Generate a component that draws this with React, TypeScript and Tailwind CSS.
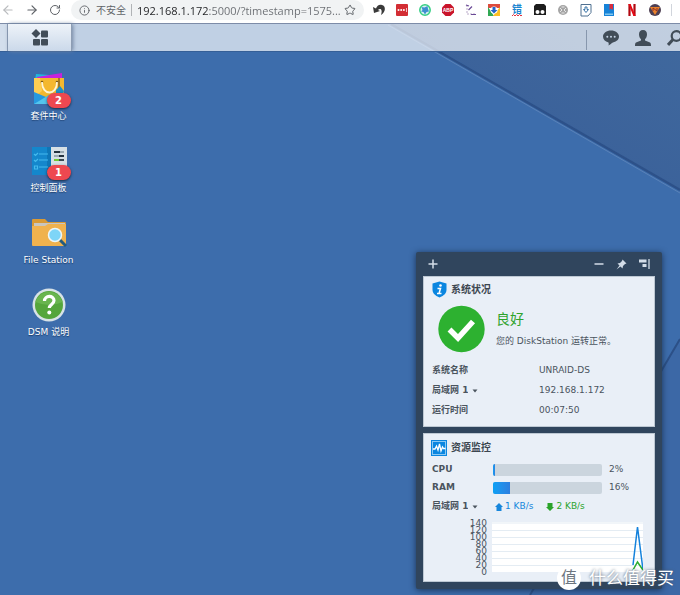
import type { ReactNode } from "react";
import { ArrowLeft, ArrowRight, Info, RotateCw, Star } from "lucide-react";

type AppProps = {
  name: string;
  badge?: number;
  children: ReactNode;
}

type MeterProps = {
  label: string;
  value: number;
}

const ticks = [140, 120, 100, 80, 60, 40, 20, 0];

function Wallpaper() {
  return (
    <svg className="absolute inset-0 h-full w-full" viewBox="0 0 680 595" preserveAspectRatio="xMaxYMin slice" aria-hidden="true">
      <defs>
        <linearGradient id="fold" x1="0" y1="1" x2="1" y2="0">
          <stop offset="0.3" stopColor="#3a6099" />
          <stop offset="1" stopColor="#40699e" />
        </linearGradient>
      </defs>
      <rect width="680" height="595" fill="#3d6dac" />
      <path d="M392 23 L680 189 V23 Z" fill="url(#fold)" />
      <path d="M391 24 L680 190" stroke="#2d5189" strokeWidth="2.500" />
      <path d="M388 25 L680 193" stroke="#5a82b8" strokeWidth="1" />
      <path d="M680 339 L530 595 H680 Z" fill="#3c68a6" />
      <path d="M680 339 L530 595" stroke="#2c5087" strokeWidth="2" />
    </svg>
  )
}

function BrowserBar() {
  return (
    <header className="relative flex h-6 items-start border-b border-[#7d8ca8] bg-white">
      <div className="flex h-5 shrink-0 items-center gap-[10px] pl-[1px] text-[#5f6368]">
        <button aria-label="Back" className="text-[#b9bbbe]"><ArrowLeft size={14} /></button>
        <button aria-label="Forward"><ArrowRight size={14} /></button>
        <button aria-label="Reload"><RotateCw size={12} /></button>
      </div>
      <div className="ml-[10px] flex h-5 min-w-0 flex-1 items-center rounded-r-full rounded-l-full bg-[#f1f3f4] pr-2 pl-2 text-[#5f6368]">
        <Info size={11} className="shrink-0" />
        <span className="ml-[6px] shrink-0 font-['Noto_Sans_CJK_SC',sans-serif] text-[10px] leading-5">不安全</span>
        <span className="mx-[5px] h-3 w-px shrink-0 bg-[#b0b3b6]" />
        <input
          aria-label="Address"
          readOnly
          value="192.168.1.172:5000/?timestamp=1575..."
          className="h-5 w-0 min-w-0 flex-1 bg-linear-to-r from-[#202124] from-[71px] to-[#6a6d72] to-[72px] bg-clip-text font-['Open_Sans',sans-serif] text-[11px] text-transparent outline-none"
        />
        <button aria-label="Bookmark" className="shrink-0"><Star size={12} /></button>
      </div>
      <div className="ml-2 flex h-5 shrink-0 items-center gap-[9px] pr-2">
        <button aria-label="Undo">
          <svg width="14" height="14" viewBox="0 0 14 14">
            <path d="M1 4 L2 10 L8 8 L6 7 C8 5 11 6 9 12 C14 9 14 3 10 2 C7 1 5 3 4 5.500 Z" fill="#3a3a3a" />
          </svg>
        </button>
        <button aria-label="Password manager">
          <svg width="14" height="14" viewBox="0 0 14 14">
            <rect x="1" y="1" width="12" height="12" rx="1" fill="#d32d34" />
            <g fill="#fff"><circle cx="3.500" cy="7" r="1" /><circle cx="6.200" cy="7" r="1" /><circle cx="8.900" cy="7" r="1" /><path d="M11 5h.7v4H11z" /></g>
          </svg>
        </button>
        <button aria-label="Sync">
          <svg width="14" height="14" viewBox="0 0 14 14">
            <circle cx="7" cy="7" r="5.200" fill="#d7f2f2" stroke="#35cf83" strokeWidth="1.500" />
            <path d="M3.500 4 L6.500 4.500 L9.500 3 L10 6 L11 8.500 L8.500 9 L7 11.500 L5.500 9 L3 8.500 L4.500 7 Z" fill="#3e8fd0" />
          </svg>
        </button>
        <button aria-label="Ad blocker">
          <svg width="14" height="14" viewBox="0 0 14 14">
            <path d="M4.500 1h5L13 4.500v5L9.500 13h-5L1 9.500v-5Z" fill="#c9142b" />
            <text x="7" y="9" textAnchor="middle" fontSize="5" fontWeight="700" fontFamily="Liberation Sans, sans-serif" fill="#fff">ABP</text>
          </svg>
        </button>
        <button aria-label="Picker">
          <svg width="14" height="14" viewBox="0 0 14 14" fill="none">
            <path d="M3 2v9h9" stroke="#b9a9c8" strokeDasharray="2 1" />
            <path d="M2 2l3 1M4.500 7l3.500-3.500M7 11.500h5" stroke="#6b4a96" strokeWidth="1.200" />
          </svg>
        </button>
        <button aria-label="Downloader">
          <svg width="14" height="14" viewBox="0 0 14 14">
            <path d="M1 1h12v4H1z" fill="#dd4b3e" /><path d="M1 4l6 9H1z" fill="#31a853" /><path d="M13 4v9H6z" fill="#fbbf24" />
            <circle cx="7" cy="7" r="3.600" fill="#fff" /><path d="M5.500 4h3v3h2L7 10.500 3.500 7h2z" fill="#2467c9" />
          </svg>
        </button>
        <button aria-label="Typo report">
          <svg width="14" height="14" viewBox="0 0 14 14">
            <text x="7" y="10" textAnchor="middle" fontSize="10" fontWeight="700" fontFamily="Noto Sans CJK SC, sans-serif" fill="#1b86d0">错</text>
            <path d="M2 13l1.500-1.500L5 13l1.500-1.500L8 13l1.500-1.500L11 13l1-1" fill="none" stroke="#e5333f" />
          </svg>
        </button>
        <button aria-label="Scripts">
          <svg width="14" height="14" viewBox="0 0 14 14">
            <path d="M3 1h8l2 2v9H1V3Z" fill="#1d1d1d" /><circle cx="4.500" cy="9" r="2" fill="#fff" /><circle cx="9.500" cy="9" r="2" fill="#fff" />
          </svg>
        </button>
        <button aria-label="Disabled extension">
          <svg width="14" height="14" viewBox="0 0 14 14">
            <circle cx="7" cy="7" r="5" fill="#a5a5a5" /><path d="M4 5l2 2-2 2M10 5L8 7l2 2M5.500 4h3M5.500 10h3" fill="none" stroke="#e8e8e8" />
          </svg>
        </button>
        <button aria-label="Save page">
          <svg width="14" height="14" viewBox="0 0 14 14" fill="none" stroke="#4f7091">
            <path d="M2 1.500h10v8L9 13H2z" /><path d="M6 4h2v2.500h1.500L7 9.500 4.500 6.500H6z" stroke="#3874a8" />
          </svg>
        </button>
        <button aria-label="Reader">
          <svg width="14" height="14" viewBox="0 0 14 14">
            <path d="M2 1h10v12H2z" fill="#1683d8" /><path d="M3 10.500h8v1.500H3z" fill="#80c6ef" /><path d="M7.500 1H11v6L9.200 5.500 7.500 7z" fill="#d92e3f" />
          </svg>
        </button>
        <button aria-label="Netflix">
          <svg width="14" height="14" viewBox="0 0 14 14">
            <path d="M4.500 1v12M9.500 1v12" stroke="#b20710" strokeWidth="2.200" /><path d="M3.400 1H5.600l5 12H8.400z" fill="#e50914" />
          </svg>
        </button>
        <button aria-label="Hero">
          <svg width="14" height="14" viewBox="0 0 14 14">
            <circle cx="7" cy="7" r="6" fill="#4d3f52" /><path d="M2 4h10l-5 8z" fill="#e9822c" /><path d="M5 8V5l4 3V5" fill="none" stroke="#8a2d29" />
          </svg>
        </button>
        <span className="h-3 w-px bg-gray-300" />
      </div>
    </header>
  )
}

function Taskbar() {
  return (
    <div className="relative flex h-7 items-stretch border-b border-[#355f97] bg-white/68 text-[#424d58]">
      <div className="w-2 border-r border-[#8d9db3] bg-white/30" />
      <button aria-label="Main menu" className="flex w-16 items-center justify-center border-r border-[#8d9db3] bg-linear-to-b from-[#eef3f9] to-[#cbd9ea] shadow-[1px_0_4px_#6f83a0]">
        <svg width="18" height="18" viewBox="0 0 18 18" fill="currentColor">
          <path d="M5 0 L9.500 4.500 L5 9 L0.500 4.500 Z" />
          <rect x="10" y="1.500" width="7" height="7" rx="1" />
          <rect x="2" y="10" width="7" height="6.500" rx="1" />
          <rect x="10" y="10" width="7" height="6.500" rx="1" />
        </svg>
      </button>
      <div className="-mr-[3px] ml-auto flex items-center gap-4">
        <span className="mt-1 h-5 w-px bg-[#8797ad]" />
        <button aria-label="Notifications">
          <svg width="16" height="16" viewBox="0 0 16 16">
            <path d="M8 .5c4.500 0 8 2.700 8 6 0 3.500-3 5-6 6-1.500.7-2.700 2-4.500 3 .4-1 .3-2 0-3C2 11.500 0 9.300 0 6.500c0-3.300 3.500-6 8-6Z" fill="currentColor" />
            <g fill="#c6d4e6"><circle cx="4.300" cy="6.700" r="1" /><circle cx="8" cy="6.700" r="1" /><circle cx="11.700" cy="6.700" r="1" /></g>
          </svg>
        </button>
        <button aria-label="Account">
          <svg width="16" height="16" viewBox="0 0 16 16" fill="currentColor">
            <path d="M8 0c2.700 0 4 1.800 4 4.300 0 2-.8 4-2 5v1.200l5 2c.8.400 1 1.500 1 3.500H0c0-2 .2-3.100 1-3.500l5-2V9.300c-1.200-1-2-3-2-5C4 1.800 5.300 0 8 0Z" />
          </svg>
        </button>
        <button aria-label="Search">
          <svg width="16" height="16" viewBox="0 0 16 16" fill="none" stroke="currentColor">
            <circle cx="9.500" cy="6" r="4.800" strokeWidth="2.200" /><path d="M6 9.500L1 15" strokeWidth="3" />
          </svg>
        </button>
      </div>
    </div>
  )
}

function DesktopApp({ name, badge, children }: AppProps) {
  return (
    <button className="flex w-[97px] flex-col items-center">
      <span className="relative flex h-[35px] w-9 items-center justify-center">
        {children}
        {badge && (
          <span className="absolute -right-1 -bottom-[2px] z-10 flex h-[15px] w-6 items-center justify-center rounded-full bg-[#ee4850] text-[10px] font-bold text-white shadow-sm shadow-black/50">
            {badge}
          </span>
        )}
      </span>
      <span className="text-[9px] leading-5 text-white [text-shadow:0_1px_1px_#1d3e6d]">{name}</span>
    </button>
  )
}

function Apps() {
  return (
    <nav className="flex flex-col gap-[17px] pt-[19px]">
      <DesktopApp name="套件中心" badge={2}>
        <svg width="34" height="34" viewBox="0 0 34 34">
          <path d="M4 2l13 1v5H3z" fill="#20b9dc" /><path d="M5 5l25-4v7H5z" fill="#c522dc" />
          <path d="M2 6h30v26H2z" fill="#f4b82f" /><path d="M2 6h6l2 13-8 6z" fill="#ffce52" />
          <path d="M2 20l12 5-5 7H2z" fill="#2699e0" /><path d="M2 32l15-9 15 9z" fill="#54c5ed" />
          <circle cx="10" cy="10" r="1.300" fill="#7d5914" /><circle cx="25" cy="10" r="1.300" fill="#7d5914" />
          <path d="M10 10c0 14 15 14 15 0" fill="none" stroke="#fff5d5" strokeWidth="1.800" />
          <path d="M27 6v10" stroke="#8d661b" strokeWidth="1.500" /><path d="M24 18l4-4 4 5-2 6-6-2z" fill="#218fc4" />
        </svg>
      </DesktopApp>
      <DesktopApp name="控制面板" badge={1}>
        <svg width="36" height="32" viewBox="0 0 36 32">
          <path d="M1 2h19v28H1z" fill="#1487cc" /><path d="M20 2h16v28H20z" fill="#d7e0e5" />
          <path d="M16 2h4v28h-4z" fill="#0e76b7" />
          <g fill="none" stroke="#44b9ed" strokeWidth="1.200"><path d="M3 9l1.500 1.500L7 8M3 15l1.500 1.500L7 14M3.500 21h3v3h-3zM8 9h9M8 15h9M8 22h9" /></g>
          <path d="M23 6h6v2h-6zM28 10h5v2h-5z" fill="#25333e" /><path d="M29 6h4v2h-4zM23 10h5v2h-5z" fill="#99a8b0" />
          <path d="M23 14h5v2h-5z" fill="#70c934" /><path d="M28 14h5v2h-5z" fill="#3a4851" />
        </svg>
      </DesktopApp>
      <DesktopApp name="File Station">
        <svg width="36" height="30" viewBox="0 0 36 30">
          <path d="M1 2q0-1 1-1h12l3 3h17q1 0 1 1v22H1z" fill="#d99a35" />
          <path d="M3 5h31v5H3z" fill="#c9c6bf" />
          <path d="M1 8h13l3-2h18v21q0 1-1 1H2q-1 0-1-1z" fill="#f0b24e" />
          <path d="M28 21l7 7" stroke="#245b7e" strokeWidth="3" />
          <circle cx="24" cy="17" r="6.500" fill="#7ed5f7" stroke="#eff6f8" strokeWidth="1.500" />
        </svg>
      </DesktopApp>
      <DesktopApp name="DSM 说明">
        <svg width="34" height="34" viewBox="0 0 34 34">
          <circle cx="17" cy="17" r="16.500" fill="#d7e2e7" /><circle cx="17" cy="17" r="14" fill="#55a63c" />
          <path d="M3.500 14a14 14 0 0 1 27 0q-13 6-27 0z" fill="#69b54f" />
          <path d="M12.500 13c0-6 9.500-6 9.500-.5 0 4-4.700 3.800-4.700 7.500" fill="none" stroke="#fff" strokeWidth="3.200" />
          <circle cx="17.300" cy="24.500" r="2" fill="#fff" />
        </svg>
      </DesktopApp>
    </nav>
  )
}

function LanSelect() {
  return (
    <span className="inline-flex items-center">
      <select aria-label="网络接口" className="field-sizing-content h-4 appearance-none font-bold">
        <option>局域网 1</option>
      </select>
      <svg className="ml-1" width="6" height="4" viewBox="0 0 6 4" aria-hidden="true"><path d="M0.500 0.500h5L3 3.500z" fill="#4a545e" /></svg>
    </span>
  )
}

function SystemHealth() {
  return (
    <section className="border border-[#bdc8d3] bg-[#e9eff7] px-2 pb-[5px]">
      <h2 className="flex h-[25px] items-center gap-1 text-[10px] font-bold text-[#3c4650]">
        <svg width="15" height="17" viewBox="0 0 15 17">
          <path d="M7.500 0.500L14.500 2.500V9q0 5-7 7.500Q.5 14 .5 9V2.500Z" fill="#0b86e0" />
          <circle cx="8.500" cy="4.500" r="1.300" fill="#fff" /><path d="M5.500 7.500h3L7 12.500h2.500M5 12.500h2" fill="none" stroke="#fff" strokeWidth="1.500" />
        </svg>
        系统状况
      </h2>
      <div className="flex items-center gap-[11px] pt-[3px] pb-2 pl-[6px]">
        <svg width="47" height="48" viewBox="0 0 47 48" className="shrink-0">
          <circle cx="23.500" cy="24" r="23.200" fill="#2db130" />
          <path d="M11.500 24.500l8.500 8.500 15-16.500" fill="none" stroke="#fff" strokeWidth="5.500" />
        </svg>
        <div>
          <p className="text-[14px] leading-6 text-[#2fa32c]">良好</p>
          <p className="text-[9px] leading-5 whitespace-nowrap">您的 DiskStation 运转正常。</p>
        </div>
      </div>
      <table className="w-full text-left text-[9px]">
        <tbody>
          <tr className="h-5"><th className="w-1/2">系统名称</th><td>UNRAID-DS</td></tr>
          <tr className="h-5"><th><LanSelect /></th><td>192.168.1.172</td></tr>
          <tr className="h-5"><th>运行时间</th><td>00:07:50</td></tr>
        </tbody>
      </table>
    </section>
  )
}

function Meter({ label, value }: MeterProps) {
  return (
    <div className="flex h-[18px] items-center">
      <span className="w-[61px] font-bold">{label}</span>
      <div role="progressbar" aria-label={label} aria-valuenow={value} className="h-3 flex-1 overflow-hidden rounded-xs bg-[#cbd5de]">
        <div className="h-full bg-linear-to-r from-[#08a0f5] to-[#2c7edf]" style={{ width: `${value}%` }} />
      </div>
      <span className="ml-[7px] w-[37px]">{value}%</span>
    </div>
  )
}

function ResourceMonitor() {
  return (
    <section className="border border-[#bdc8d3] bg-[#e9eff7] px-2 pb-[7px] text-[9px]">
      <h2 className="flex h-[27px] items-center gap-1 text-[10px] font-bold text-[#3c4650]">
        <svg width="16" height="16" viewBox="0 0 16 16" className="-ml-px">
          <rect width="16" height="16" fill="#0b86e0" /><rect x="1.500" y="1.500" width="13" height="13" fill="none" stroke="#8cc9f4" />
          <path d="M2 9h2l1.500-3 1.500 4 1.500-6 1.500 7 1.500-4 1 1.500h2" fill="none" stroke="#fff" strokeWidth="1.300" />
        </svg>
        资源监控
      </h2>
      <Meter label="CPU" value={2} />
      <Meter label="RAM" value={16} />
      <div className="flex h-5 items-center">
        <span className="w-[63px]"><LanSelect /></span>
        <span className="flex items-center gap-[2px] whitespace-nowrap text-[#1686dc]">
          <svg width="8" height="8" viewBox="0 0 8 8"><path d="M4 0l4 4H6.500v4h-5V4H0z" fill="currentColor" /></svg>
          1 KB/s
        </span>
        <span className="ml-[13px] flex items-center gap-[2px] whitespace-nowrap text-[#2aa32a]">
          <svg width="8" height="8" viewBox="0 0 8 8"><path d="M4 8l4-4H6.500V0h-5v4H0z" fill="currentColor" /></svg>
          2 KB/s
        </span>
      </div>
      <div className="flex items-center pt-[3px] pr-[3px]">
        <div className="mr-[5px] flex h-[54px] w-[55px] flex-col justify-between text-right leading-[7px]">
          {ticks.map((tick) => <span key={tick}>{tick}</span>)}
        </div>
        <svg className="h-[50px] min-w-0 flex-1" viewBox="0 0 151 50" preserveAspectRatio="none">
          <rect width="151" height="50" fill="#fff" />
          <path d="M0 1h151M0 8.500h151M0 15.500h151M0 22.500h151M0 29.500h151M0 36.500h151M0 43.500h151" stroke="#e4ecf3" />
          <path d="M141 43L145.500 5L151 48" fill="none" stroke="#1482dc" strokeWidth="1.500" />
          <path d="M141 48L145.500 40L151 48" fill="none" stroke="#2bad2d" strokeWidth="1.500" />
        </svg>
      </div>
    </section>
  )
}

function WidgetPanel() {
  return (
    <aside className="mr-[18px] mb-[6px] w-[246px] self-end rounded-xs bg-[#30455d] px-[7px] pb-[7px] text-[#4a545e] shadow-[0_1px_6px_#1b3355]">
      <div className="flex h-6 items-center gap-3 px-[5px] text-[#d3dde8]">
        <button aria-label="Add widget" className="mr-auto">
          <svg width="10" height="10" viewBox="0 0 10 10"><path d="M5 0.500v9M0.500 5h9" stroke="currentColor" strokeWidth="1.500" /></svg>
        </button>
        <button aria-label="Minimize">
          <svg width="10" height="10" viewBox="0 0 10 10"><path d="M0.500 5h9" stroke="currentColor" strokeWidth="1.500" /></svg>
        </button>
        <button aria-label="Pin">
          <svg width="11" height="11" viewBox="0 0 11 11"><path d="M6.500 .5L10.500 4.500l-1.500.5-2 2L6.500 9.500 4.500 7.500.5 10.500 3.500 6.500 1.500 4.500 4 4l2-2z" fill="currentColor" /></svg>
        </button>
        <button aria-label="Dock right">
          <svg width="11" height="10" viewBox="0 0 11 10" fill="none" stroke="currentColor"><path d="M0 2h7.500M3.500 6.500h4" strokeWidth="3" /><path d="M10 0v10" strokeWidth="1.300" /></svg>
        </button>
      </div>
      <div className="flex flex-col gap-[6px]">
        <SystemHealth />
        <ResourceMonitor />
      </div>
    </aside>
  )
}

function Watermark() {
  return (
    <div className="pointer-events-none absolute right-[6px] bottom-[5px] flex items-center gap-2 text-[17px] leading-6 text-white [text-shadow:0_0_3px_#46566a]">
      <span className="flex h-6 w-6 items-center justify-center rounded-full bg-white text-[16px] text-[#6d7680] [text-shadow:none]">值</span>
      什么值得买
    </div>
  )
}

export default function App() {
  return (
    <div className="relative flex min-h-screen flex-col overflow-hidden font-['DejaVu_Sans','Noto_Sans_CJK_SC',sans-serif]">
      <Wallpaper />
      <BrowserBar />
      <Taskbar />
      <main className="relative flex flex-1 items-start justify-between">
        <Apps />
        <WidgetPanel />
        <Watermark />
      </main>
    </div>
  )
}
